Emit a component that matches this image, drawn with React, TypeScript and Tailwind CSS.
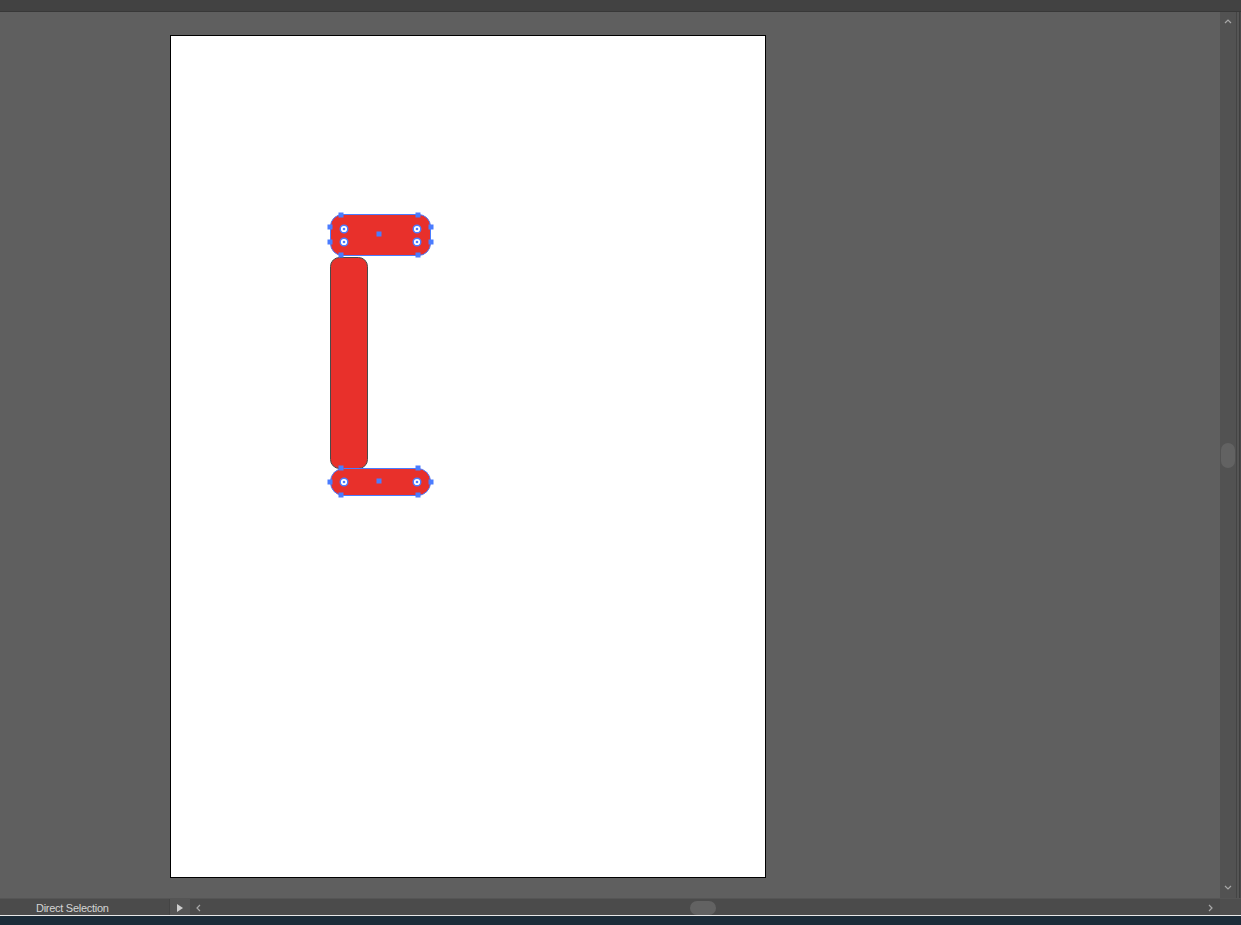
import React from 'react';

const RED = '#e8302b';
const BLUE = '#4a7cff';

const Handle = ({ x, y }: { x: number; y: number }) => (
  <rect x={x - 2.5} y={y - 2.5} width={5} height={5} fill={BLUE} />
);

const Widget = ({ x, y }: { x: number; y: number }) => (
  <g>
    <circle cx={x} cy={y} r={3.8} fill="#ffffff" stroke={BLUE} strokeWidth={1.4} />
    <circle cx={x} cy={y} r={1.3} fill={BLUE} />
  </g>
);

// artwork drawn in page coordinates (viewBox starts at artboard inner corner)
const Artwork = () => (
  <svg width={594} height={841} viewBox="171 36 594 841" className="block">
    {/* vertical bar */}
    <rect x={330.5} y={257.5} width={37} height={211} rx={9} fill={RED} stroke="#4a4a4a" strokeWidth={1} />

    {/* top pill, selected */}
    <rect x={330.5} y={214.5} width={100} height={41} rx={12} fill={RED} stroke={BLUE} strokeWidth={1} />
    {[
      [341, 215], [418, 215], [341, 255], [418, 255],
      [330, 227], [330, 242], [431, 227], [431, 242],
      [379, 234],
    ].map(([x, y], i) => <Handle key={i} x={x} y={y} />)}
    {[[344, 229], [344, 242], [417, 229], [417, 242]].map(([x, y], i) => (
      <Widget key={i} x={x} y={y} />
    ))}

    {/* bottom pill, selected */}
    <rect x={330.5} y={468.5} width={100} height={27} rx={13} fill={RED} stroke={BLUE} strokeWidth={1} />
    {[
      [341, 468], [418, 468], [341, 495], [418, 495],
      [330, 482], [431, 482], [379, 481],
    ].map(([x, y], i) => <Handle key={i} x={x} y={y} />)}
    {[[344, 482], [417, 482]].map(([x, y], i) => (
      <Widget key={i} x={x} y={y} />
    ))}
  </svg>
);

const Chevron = ({ dir }: { dir: 'up' | 'down' | 'left' | 'right' }) => {
  const d = {
    up: 'M1 5 L4 2 L7 5',
    down: 'M1 2 L4 5 L7 2',
    left: 'M5 1 L2 4 L5 7',
    right: 'M2 1 L5 4 L2 7',
  }[dir];
  return (
    <svg width={8} height={8} viewBox="0 0 8 8">
      <path d={d} fill="none" stroke="#a8a8a8" strokeWidth={1.2} />
    </svg>
  );
};

export default function App() {
  return (
    <div className="w-[1241px] h-[925px] flex flex-col overflow-hidden bg-[#5f5f5f]" style={{ fontFamily: '"Liberation Sans", Arial, sans-serif' }}>
      {/* top bar */}
      <div className="h-[12px] bg-[#424242] border-b border-[#383838]" />

      {/* workspace */}
      <div className="h-[886px] flex">
        <div className="w-[1220px] bg-[#5f5f5f] pl-[170px] pt-[23px]">
          <div className="w-[596px] h-[843px] border border-black bg-white">
            <Artwork />
          </div>
        </div>
        {/* vertical scrollbar */}
        <div className="w-[16px] bg-[#525252] flex flex-col items-center pt-[6px] pb-[6px]">
          <Chevron dir="up" />
          <div className="flex-1 flex flex-col pt-[417px]">
            <div className="w-[14px] h-[25px] rounded-full bg-[#626262]" />
          </div>
          <Chevron dir="down" />
        </div>
        <div className="w-[5px] flex">
          <div className="w-[1px] bg-[#444444]" />
          <div className="w-[2px] bg-[#555555]" />
          <div className="w-[1px] bg-[#3e3e3e]" />
          <div className="w-[1px] bg-[#4a4a4a]" />
        </div>
      </div>

      {/* status bar */}
      <div className="h-[17px] flex bg-[#4b4b4b] border-t border-[#555555]">
        <div className="w-[170px] flex items-center pl-[36px] pt-[3px] text-[11px] text-[#d4d4d4] tracking-tight border-r border-[#444444]">
          Direct Selection
        </div>
        <div className="w-[20px] flex items-center justify-center pt-[1px] bg-[#555555]">
          <svg width={8} height={10} viewBox="0 0 8 10">
            <path d="M1 1 L7 5 L1 9 Z" fill="#d0d0d0" />
          </svg>
        </div>
        <div className="flex-1 flex items-center pl-[5px] pr-[5px] pt-[1px]">
          <Chevron dir="left" />
          <div className="flex-1 flex pl-[487px]">
            <div className="w-[26px] h-[14px] rounded-full bg-[#626262]" />
          </div>
          <Chevron dir="right" />
        </div>
        <div className="w-[21px] bg-[#4e4e4e]" />
      </div>
      <div className="h-[1px] bg-[#e8e8e8]" />
      <div className="flex-1 bg-[#1b2b38]" />
    </div>
  );
}
